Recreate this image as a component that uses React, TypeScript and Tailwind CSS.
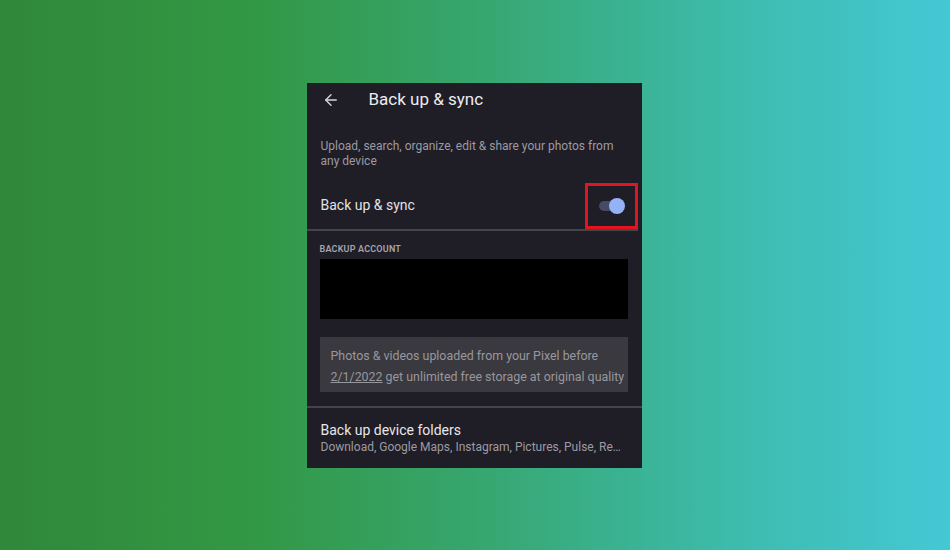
import { ArrowLeft } from "lucide-react";

export default function App() {
  return (
    <div className="w-[950px] h-[550px] flex items-center justify-center pr-[2px] bg-[linear-gradient(90deg,#30883a_0%,#329743_25%,#37a66e_50%,#3dbcae_78%,#44c8d5_100%)] font-['Roboto',sans-serif]">
      {/* phone screen */}
      <div className="w-[335px] h-[385px] bg-[#1f1d26] flex flex-col overflow-hidden">
        <div className="flex items-center h-[34px] pl-[15px]">
          <ArrowLeft className="w-[18px] h-[18px] text-[#d8d8dc]" strokeWidth={1.8} />
          <p className="ml-[29px] text-[17px] text-[#ececf0] leading-none">Back up &amp; sync</p>
        </div>

        <div className="px-[14px] pt-[22px] text-[12px] leading-[15px] text-[#9c9ba3]">
          Upload, search, organize, edit &amp; share your photos from any device
        </div>

        <div className="flex items-center justify-between h-[46px] mt-[14px] pl-[14px] pr-[4px]">
          <p className="text-[14px] text-[#e2e2e6]">Back up &amp; sync</p>
          <div className="relative w-[53px] h-[46px] border-[3px] border-[#e0151f] flex items-center justify-center">
            <div className="relative w-[28px] h-[14px]">
              <div className="absolute left-[2px] top-[2px] w-[24px] h-[10px] rounded-full bg-[#474a62]" />
              <div className="absolute right-0 top-[-1px] w-[16px] h-[16px] rounded-full bg-[#94b2f6]" />
            </div>
          </div>
        </div>

        <div className="h-[2px] bg-[#45444b] mr-[4px]" />

        <div className="pl-[13px] pr-[14px] pt-[14px]">
          <p className="text-[9px] font-semibold tracking-[0.2px] text-[#a6a5ac] leading-none">BACKUP ACCOUNT</p>
          <div className="mt-[5px] h-[60px] bg-black" />
          <div className="mt-[18px] h-[55px] bg-[#3a393f] px-[11px] pt-[8px] text-[12.4px] leading-[21px] text-[#98979e]">
            <p className="whitespace-nowrap">Photos &amp; videos uploaded from your Pixel before</p>
            <p className="whitespace-nowrap"><span className="underline">2/1/2022</span> get unlimited free storage at original quality</p>
          </div>
        </div>

        <div className="h-[2px] bg-[#45444b] mt-[14px]" />

        <div className="px-[14px] pt-[13px]">
          <p className="text-[14px] leading-[18px] text-[#e8e8ec]">Back up device folders</p>
          <p className="text-[12px] leading-[16px] text-[#9c9ba3] truncate pr-[2px]">
            Download, Google Maps, Instagram, Pictures, Pulse, Recordings, Screenshots
          </p>
        </div>
      </div>
    </div>
  );
}
